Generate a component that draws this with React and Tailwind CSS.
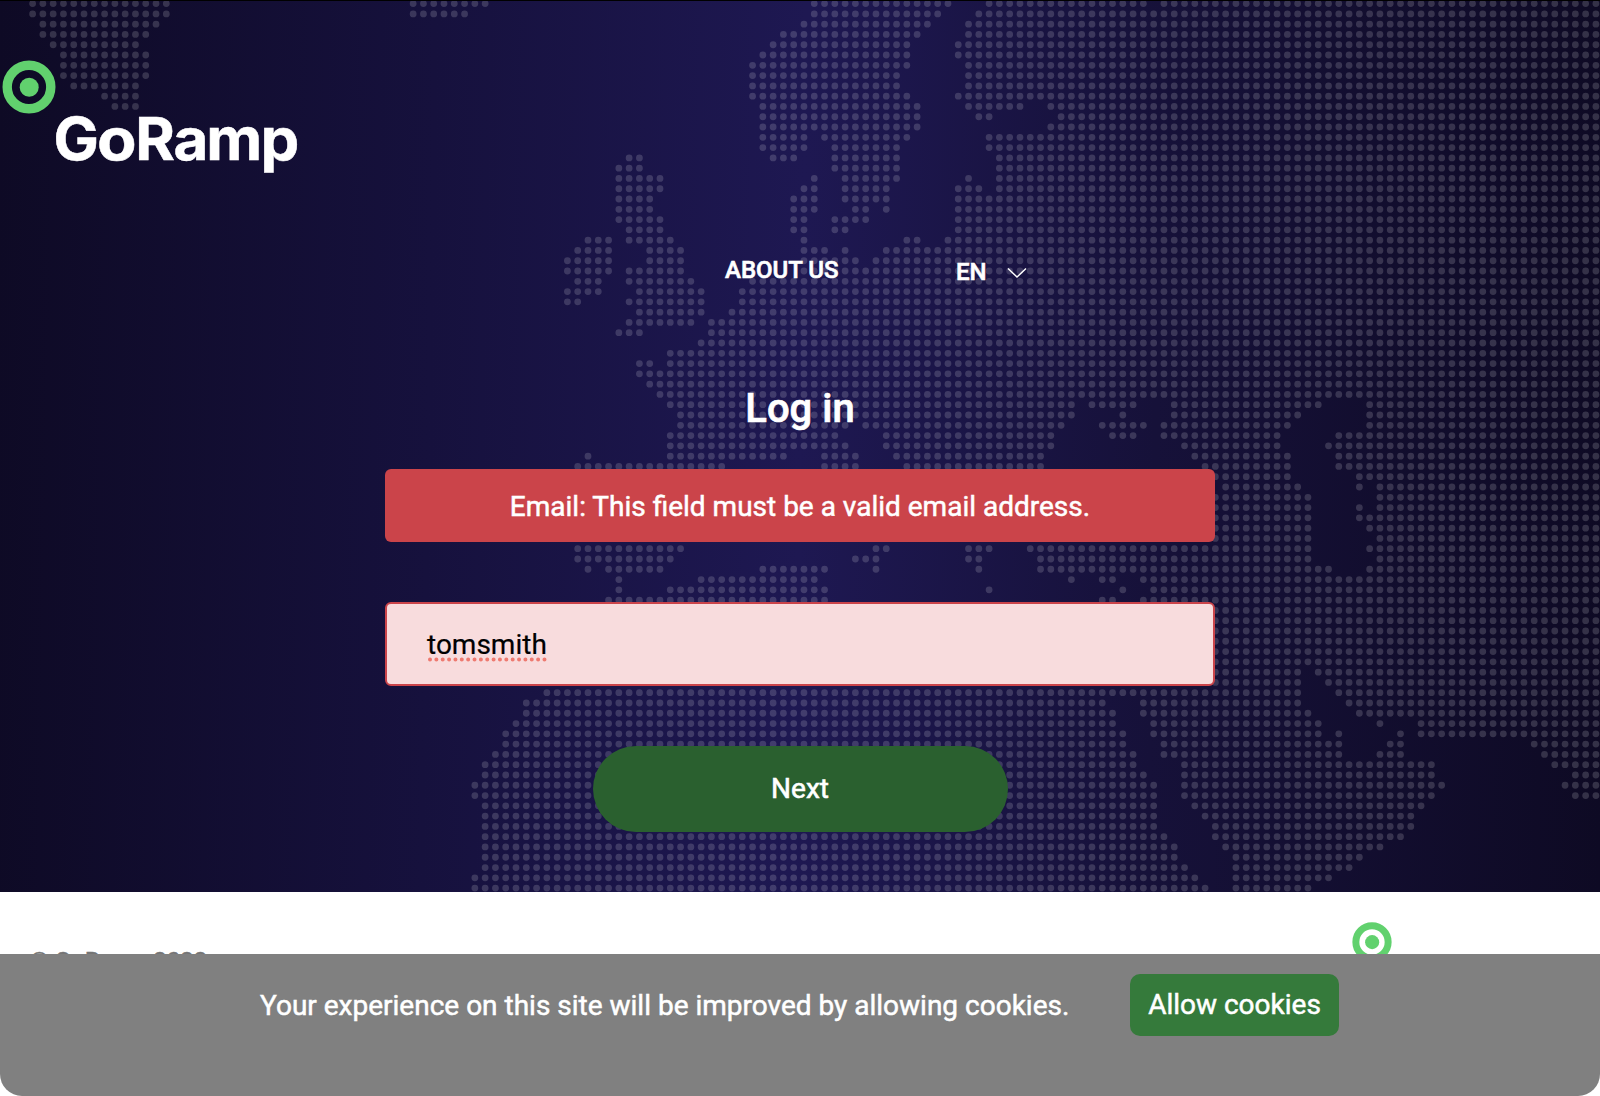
import React from "react";

// Width of one map cell and the centre of the first one, in pixels.
const PITCH = 10.285;
const X0 = 1.75;
const Y0 = 3.6;

// One entry per map row: pairs of first and last filled column.
const MAP_ROWS = [
  "3-16 40-47 79-92 96-111 113-155",
  "3-16 40-45 79-91 95-155",
  "4-15 78-90 94-155",
  "4-14 76-89 94-155",
  "5-13 75-88 93-155",
  "6-14 74-88 93-155",
  "6-14 73-88 94-155",
  "6-14 73-87 94-155",
  "7-13 73-87 94-155",
  "10-13 73-88 93-155",
  "11-13 74-89 94-99 102-155",
  "74-89 95-96 103-155",
  "74-89 102-155",
  "74-78 80-88 96-155",
  "74-78 81-87 96-155",
  "61-62 75-77 81-87 97-155",
  "60-62 81-87 97-155",
  "60-64 79-79 82-87 94-94 97-155",
  "60-64 78-79 82-86 93-95 97-155",
  "60-63 77-79 82-86 93-155",
  "60-63 77-79 83-84 86-86 93-155",
  "60-64 77-78 81-84 93-155",
  "61-64 77-78 81-82 93-155",
  "57-59 61-65 78-78 88-89 92-155",
  "56-59 63-66 78-80 82-82 86-155",
  "55-59 63-66 78-83 85-155",
  "55-59 61-66 78-155",
  "56-58 61-67 73-155",
  "55-58 62-68 72-155",
  "55-56 61-68 72-155",
  "62-68 71-155",
  "61-67 69-155",
  "60-62 69-155",
  "68-155",
  "65-155",
  "62-63 65-155",
  "62-155",
  "63-155",
  "64-155",
  "65-104 106-110 114-128 133-155",
  "66-104 109-109 114-126 133-155",
  "66-82 84-103 107-111 113-125 133-155",
  "65-81 86-102 108-110 113-124 130-155",
  "65-82 86-102 115-124 129-155",
  "57-57 65-76 80-83 87-101 116-125 130-155",
  "56-70 80-83 88-101 117-125 130-155",
  "118-125 132-155",
  "119-126 132-132 134-155",
  "118-127 134-155",
  "118-127 132-132 134-155",
  "118-127 132-155",
  "118-127 133-155",
  "118-127 134-155",
  "56-66 85-86 94-96 100-127 133-155",
  "56-65 83-85 94-95 101-127 134-155",
  "57-57 59-64 74-80 85-85 95-95 101-129 133-155",
  "60-60 68-79 104-104 107-108 111-155",
  "60-60 65-80 96-96 109-109 112-155",
  "59-80 107-108 111-155",
  "118-155",
  "118-155",
  "118-155",
  "118-155",
  "118-155",
  "118-155",
  "118-126 128-155",
  "118-126 129-155",
  "53-126 130-155",
  "51-107 111-126 131-155",
  "51-108 111-127 132-155",
  "50-108 112-128 134-134 138-155",
  "49-109 112-128 130-130 136-136 138-155",
  "49-109 113-130 135-136 149-155",
  "48-110 113-130 134-136 150-155",
  "47-110 115-139 151-155",
  "47-111 115-139 153-155",
  "46-112 115-140 152-155",
  "46-112 115-139 153-155",
  "47-112 116-138",
  "47-112 117-137",
  "47-112 118-137",
  "47-113 118-136",
  "47-114 119-134",
  "47-114 120-132",
  "47-115 120-131",
  "46-116 120-129",
  "46-117 120-127",
];

// Zero-length dashes with round caps draw one dot per column.
const MAP_PATH = MAP_ROWS.map((row, r) => {
  const y = (Y0 + r * PITCH).toFixed(2);
  return row
    .split(" ")
    .map((run) => {
      const [a, b] = run.split("-").map(Number);
      let d = "";
      for (let c = a; c <= b; c++) d += `M${(X0 + c * PITCH).toFixed(2)} ${y}h0`;
      return d;
    })
    .join("");
}).join("");

function DotMap() {
  return (
    <svg className="absolute left-0 -top-px" width="1600" height="892" aria-hidden="true">
      <path d={MAP_PATH} stroke="#fff" strokeOpacity="0.16" strokeWidth="6.8" strokeLinecap="round" fill="none" />
      <rect width="1600" height="1" fill="#000" />
    </svg>
  );
}

function Target({ className }) {
  return (
    <svg viewBox="0 0 54 54" className={className} aria-hidden="true">
      <circle cx="27" cy="27" r="21.8" fill="none" stroke="#61d16e" strokeWidth="9.4" />
      <circle cx="27.2" cy="27.2" r="9.5" fill="#61d16e" />
    </svg>
  );
}

// Letter, left edge and set width of each glyph of the brand name.
const WORDMARK = [
  ["G", -0.4, 45.4],
  ["o", 43, 39.6],
  ["R", 81.2, 39.7],
  ["a", 119.4, 34.9],
  ["m", 152.3, 56],
  ["p", 206.6, 38.8],
];

function Wordmark() {
  return (
    <svg width="250" height="64" className="-mt-[1px] ml-[54px] block overflow-visible" aria-label="GoRamp">
      <text y="46.5" fill="#fff" stroke="#fff" strokeWidth="0.5" fontSize="58.5" fontWeight="700" fontFamily="Inter, sans-serif">
        {WORDMARK.map(([ch, x, w]) => (
          <tspan key={ch} x={x} textLength={w} lengthAdjust="spacingAndGlyphs">
            {ch}
          </tspan>
        ))}
      </text>
    </svg>
  );
}

export default function App() {
  return (
    <div className="flex h-[1096px] w-[1600px] flex-col overflow-hidden bg-white font-[Roboto,sans-serif]">
      <section className="relative h-[892px] shrink-0 border-t border-black bg-[linear-gradient(91deg,#0e0a25_0%,#16113d_27%,#1e1852_50%,#161139_72%,#0e0a24_100%)]">
        <DotMap />
        <div className="relative flex flex-col">
          <header className="h-[240px] pt-[59px]">
            <Target className="ml-[2px] block size-[54px]" />
            <Wordmark />
          </header>
          <nav className="flex h-[60px] items-start pl-[725px] text-[24px] font-medium leading-[28px] text-white [-webkit-text-stroke:0.6px_#fff]">
            <a className="mt-[15px] w-[231px] whitespace-nowrap">ABOUT US</a>
            <span className="mt-[17px] w-[50.5px]">EN</span>
            <svg width="20" height="12" className="mt-[26px]" fill="none" stroke="#fff" strokeWidth="1.5">
              <path d="M1 1.5 L10 10 L19 1.5" />
            </svg>
          </nav>
          <main className="mx-auto flex w-[830px] flex-col items-center">
            <h1 className="mt-[84px] text-[40px] font-medium leading-[48px] text-white [-webkit-text-stroke:0.7px_#fff]">Log in</h1>
            <div className="mt-[36px] flex h-[73px] w-full items-center justify-center rounded-[6px] bg-[#cb444a] pt-[2px] text-[28px] text-white [-webkit-text-stroke:0.5px_#fff]">
              Email: This field must be a valid email address.
            </div>
            <div className="mt-[60px] flex h-[84px] w-full items-center rounded-[6px] border-2 border-[#cb444a] bg-[#f8dcdd] px-[40px] pt-[2px] text-[28px] text-black [-webkit-text-stroke:0.2px_#000]">
              <span className="relative">
                tomsmith
                <svg width="120" height="5" className="absolute -left-[0.5px] top-[33px]" aria-hidden="true">
                  <path d="M3 2.5H119" stroke="#ee7a70" strokeWidth="4" strokeLinecap="round" strokeDasharray="0 6.36" />
                </svg>
              </span>
            </div>
            <button className="mt-[60px] h-[86px] w-[415px] rounded-[43px] bg-[#2a602f] text-[28px] text-white [-webkit-text-stroke:0.6px_#fff]">
              Next
            </button>
          </main>
        </div>
      </section>
      <footer className="flex h-[62px] shrink-0 items-start justify-between pl-[30px] pr-[208.5px]">
        <p className="mt-[53px] whitespace-nowrap text-[24px] leading-[32px] text-[#757575] [-webkit-text-stroke:0.4px_#757575]">© GoRamp 2022</p>
        <Target className="mt-[29.5px] size-[40px]" />
      </footer>
      <div className="relative flex h-[142px] shrink-0 items-start rounded-b-[22px] bg-[#808080] pl-[260px] pt-[20px] text-[28px] text-white [-webkit-text-stroke:0.5px_#fff]">
        <p className="mt-px h-[62px] w-[870px] whitespace-nowrap leading-[62px]">
          Your experience on this site will be improved by allowing cookies.
        </p>
        <button className="h-[62px] w-[209px] whitespace-nowrap rounded-[10px] bg-[#357a3b]">Allow cookies</button>
      </div>
    </div>
  );
}
